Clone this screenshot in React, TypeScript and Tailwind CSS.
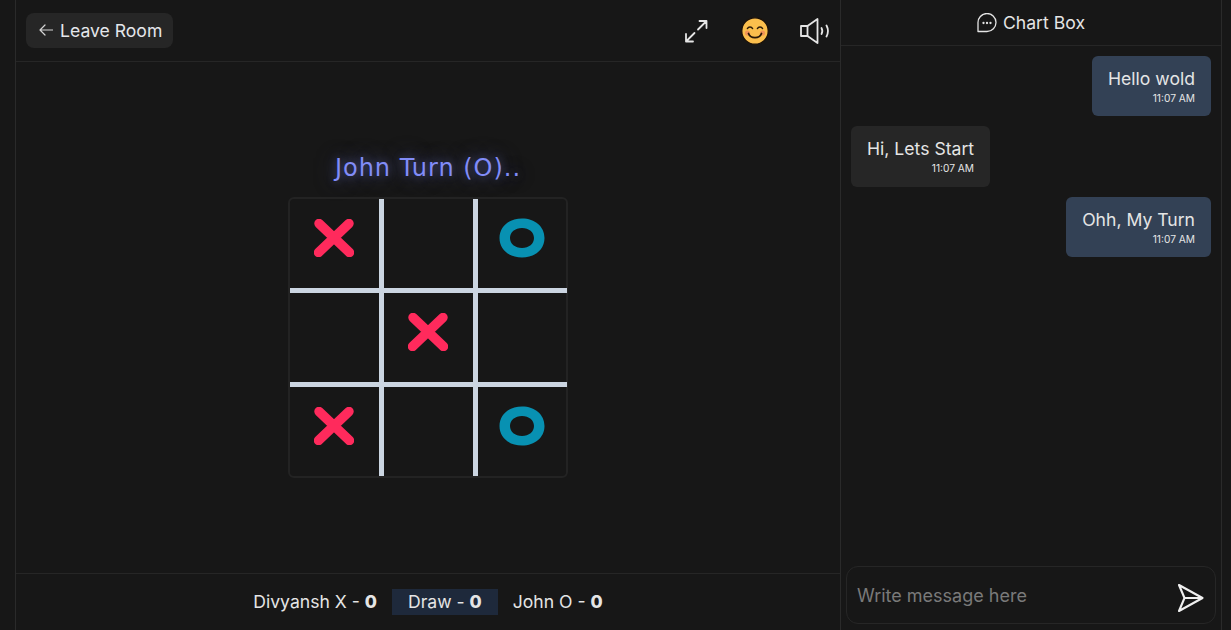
import React from 'react';

const XMark = () => (
  <svg width="40" height="38" viewBox="0 0 40 38" fill="none">
    <path d="M5 4.500 L35.500 33.500 M35 4.500 L4.500 33.500" stroke="#ff2a5c" strokeWidth="9.500" strokeLinecap="round" />
  </svg>
);

const OMark = () => (
  <svg width="46" height="40" viewBox="0 0 46 40">
    <path
      fillRule="evenodd"
      fill="#0891b2"
      d="M23 .500C36 .500 45.500 8.500 45.500 20S36 39.500 23 39.500 .500 31.500 .500 20 10 .500 23 .500zM23 10C16 10 11 14.200 11 20s5 10 12 10 12-4.200 12-10-5-10-12-10z"
    />
  </svg>
);

const board = ['X', '', 'O', '', 'X', '', 'X', '', 'O'];

const ExpandIcon = () => (
  <svg width="24" height="24" viewBox="0 0 24 24" fill="none" stroke="#e5e5e5" strokeWidth="1.800" strokeLinecap="round" strokeLinejoin="round">
    <path d="M15.500 2H22.500V9M22.500 2 14 10.500M2 15V22.500H9M2 22.500l8.500-8.500" />
  </svg>
);

const SmileIcon = () => (
  <svg width="28" height="28" viewBox="0 0 28 28" fill="none">
    <circle cx="14" cy="14" r="13.200" fill="#fbbf4d" stroke="#1a1008" strokeWidth="1.200" />
    <circle cx="6.500" cy="16" r="2.600" fill="#f08a5a" opacity="0.8" />
    <circle cx="21.500" cy="16" r="2.600" fill="#f08a5a" opacity="0.8" />
    <path d="M6.500 11.500c1-2 4-2 5 0M16.500 11.500c1-2 4-2 5 0" stroke="#2a1a08" strokeWidth="1.600" strokeLinecap="round" />
    <path d="M7.500 16.500c2 5.500 11 5.500 13 0" stroke="#2a1a08" strokeWidth="1.800" strokeLinecap="round" />
  </svg>
);

const SpeakerIcon = () => (
  <svg width="30" height="26" viewBox="0 0 30 26" fill="none" stroke="#e5e5e5" strokeWidth="1.800" strokeLinejoin="round" strokeLinecap="round">
    <path d="M1 8h6.500L17.500 1v24L7.500 18H1z" />
    <path d="M7.500 8v10" />
    <path d="M21.500 10c1 1.800 1 4.200 0 6" />
    <path d="M26.500 7.500c1.800 3.400 1.800 7.600 0 11" />
  </svg>
);

const ChatIcon = () => (
  <svg width="20" height="20" viewBox="0 0 20 20" fill="none" stroke="#e5e5e5" strokeWidth="1.300" strokeLinejoin="round">
    <path d="M1 18.500V10a9 9 0 1 1 9 8.500z" />
    <circle cx="6.500" cy="10" r="0.500" fill="#e5e5e5" />
    <circle cx="10" cy="10" r="0.500" fill="#e5e5e5" />
    <circle cx="13.500" cy="10" r="0.500" fill="#e5e5e5" />
  </svg>
);

const SendIcon = () => (
  <svg width="27" height="30" viewBox="0 0 27 30" fill="none" stroke="#f0f0f0" strokeWidth="2.100" strokeLinejoin="round" strokeLinecap="round">
    <path d="M2 2 L25.500 15 L2 28 L7.500 15 Z M7.500 15 H24" />
  </svg>
);

const ArrowLeft = () => (
  <svg width="14" height="12" viewBox="0 0 14 12" fill="none" stroke="#d4d4d4" strokeWidth="1.200" strokeLinecap="round" strokeLinejoin="round">
    <path d="M13.500 6H1M6 1 1 6l5 5" />
  </svg>
);

const messages = [
  { text: 'Hello wold', mine: true },
  { text: 'Hi, Lets Start', mine: false },
  { text: 'Ohh, My Turn', mine: true },
];

export default function App() {
  return (
    <div className="h-[630px] w-[1231px] overflow-hidden bg-[#171717] flex text-[#e5e5e5] font-['Inter',sans-serif]">
      <div className="w-4 border-r border-[#2a2a2a]" />

      {/* game side */}
      <div className="w-[825px] border-r border-[#2a2a2a] flex flex-col">
        <div className="h-[62px] border-b border-[#262626] flex items-center justify-between pl-[10px] pr-[10px]">
          <button className="h-[35px] w-[147px] -mt-[1px] rounded-lg bg-[#262626] flex items-center pl-[13px] gap-[7px] text-[17.6px] text-[#e5e7eb]">
            <ArrowLeft />
            <span className="pt-[2px]">Leave Room</span>
          </button>
          <div className="flex items-center">
            <ExpandIcon />
            <div className="ml-[33px]"><SmileIcon /></div>
            <div className="ml-[31px]"><SpeakerIcon /></div>
          </div>
        </div>

        <div className="flex-1 flex flex-col items-center">
          <div className="mt-[88px] h-[36px] px-[10px] text-[24px] tracking-[1px] leading-[36px] text-[#818cf8] font-['DejaVu_Sans',sans-serif] [text-shadow:0_0_8px_rgba(129,140,248,0.35),0_0_20px_rgba(129,140,248,0.5)]">
            John Turn (O)..
          </div>
          <div className="mt-[11px] w-[280px] h-[281px] border-2 border-[#232323] rounded-md grid grid-cols-[94px_94px_89px] grid-rows-[94px_94px_89px]">
            {board.map((cell, i) => (
              <div
                key={i}
                className={`flex items-center justify-center border-[#cbd5e1] pb-[12px] pr-[1px] ${i % 3 !== 2 ? 'border-r-[5px]' : ''} ${i < 6 ? 'border-b-[5px]' : ''}`}
              >
                {cell === 'X' && <XMark />}
                {cell === 'O' && <OMark />}
              </div>
            ))}
          </div>
        </div>

        <div className="h-[57px] border-t border-[#262626] flex items-center justify-center text-[17.6px] gap-[15px]">
          <div>Divyansh X - <b className="font-extrabold">0</b></div>
          <div className="h-[26px] px-[16px] bg-[#1e293b] flex items-center">
            <span>Draw - <b className="font-extrabold">0</b></span>
          </div>
          <div>John O - <b className="font-extrabold">0</b></div>
        </div>
      </div>

      {/* chat side */}
      <div className="w-[381px] border-r border-[#2a2a2a] flex flex-col">
        <div className="h-[46px] border-b border-[#262626] flex items-center justify-center gap-[6px] text-[17.6px] pt-[1px]">
          <ChatIcon />
          Chart Box
        </div>
        <div className="flex-1 flex flex-col gap-[10px] px-[10px] pt-[10px]">
          {messages.map((m, i) => (
            <div key={i} className={`flex ${m.mine ? 'justify-end' : 'justify-start'}`}>
              <div className={`h-[60.4px] rounded-md px-4 pt-[12px] ${m.mine ? 'bg-[#334155]' : 'bg-[#262626]'}`}>
                <div className="text-[17.6px] leading-[22px]">{m.text}</div>
                <div className="text-[10.2px] leading-[14px] mt-[1px] text-right">11:07 AM</div>
              </div>
            </div>
          ))}
        </div>
        <div className="ml-[5px] mr-[5px] mb-[6px] h-[58px] rounded-xl border border-[#262626] flex items-center justify-between pl-[10px] pr-[11px]">
          <span className="text-[18px] text-[#7a7a7a]">Write message here</span>
          <div className="mt-[5px]"><SendIcon /></div>
        </div>
      </div>
    </div>
  );
}
